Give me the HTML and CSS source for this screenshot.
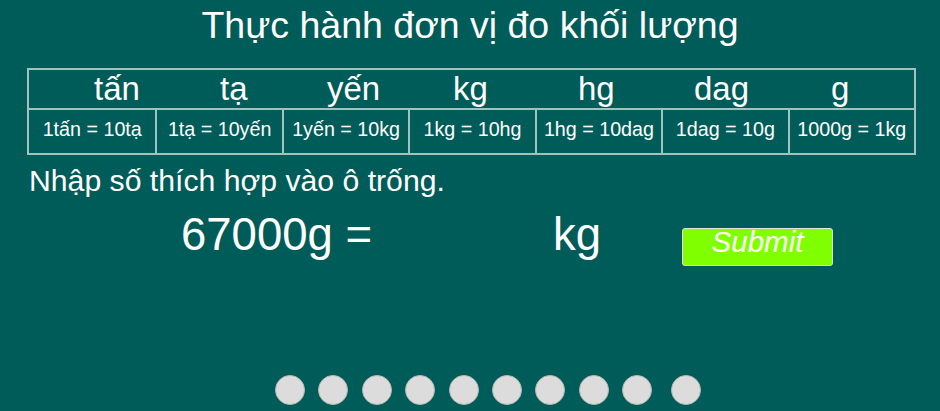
FILE: index.html
```html
<!DOCTYPE html>
<html lang="vi">
<head>
<meta charset="utf-8">
<title>Thực hành đơn vị đo khối lượng</title>
<link rel="stylesheet" href="styles.css">
</head>
<body>
<main class="page">
  <h1 class="title">Thực hành đơn vị đo khối lượng</h1>
  <div class="table">
    <div class="units">
      <span>tấn</span><span>tạ</span><span>yến</span><span>kg</span><span>hg</span><span>dag</span><span>g</span>
    </div>
    <div class="rules">
      <div class="rule">1tấn = 10tạ</div>
      <div class="rule">1tạ = 10yến</div>
      <div class="rule">1yến = 10kg</div>
      <div class="rule">1kg = 10hg</div>
      <div class="rule">1hg = 10dag</div>
      <div class="rule">1dag = 10g</div>
      <div class="rule">1000g = 1kg</div>
    </div>
  </div>
  <p class="prompt">Nhập số thích hợp vào ô trống.</p>
  <div class="equation">
    <div class="lhs"><span>67000g =</span><input class="answer" type="text" aria-label="answer"></div>
    <div class="unit">kg</div>
    <button class="submit" type="button">Submit</button>
  </div>
  <div class="dots">
    <span class="dot"></span><span class="dot"></span><span class="dot"></span><span class="dot"></span><span class="dot"></span><span class="dot"></span><span class="dot"></span><span class="dot"></span><span class="dot"></span><span class="dot dot-last"></span>
  </div>
</main>
</body>
</html>
```
FILE: styles.css
```css
html, body {
  margin: 0;
  padding: 0;
  background: #005c58;
}
body {
  font-family: "Liberation Sans", Arial, sans-serif;
  color: #ffffff;
}
.page {
  width: 940px;
  height: 411px;
  display: flex;
  flex-direction: column;
  box-sizing: border-box;
  padding-bottom: 6px;
}
.title {
  margin: 4px 0 0;
  font-size: 37.5px;
  line-height: 42px;
  font-weight: normal;
  text-align: center;
}
.table {
  margin: 22px 0 0 27px;
  width: 889px;
  border: 2px solid #a3c2bf;
  box-sizing: border-box;
}
.units {
  height: 38px;
  display: grid;
  grid-template-columns: 126px 107px 126px 125px 116px 137px 1fr;
  padding-left: 65px;
  align-items: center;
  font-size: 33px;
  line-height: 34px;
  border-bottom: 2px solid #a3c2bf;
}
.rules {
  height: 43px;
  display: grid;
  grid-template-columns: repeat(7, 1fr);
}
.rule {
  display: flex;
  align-items: center;
  justify-content: center;
  font-size: 19.7px;
  padding-bottom: 4px;
  border-left: 2px solid #a3c2bf;
}
.rule:first-child {
  border-left: none;
}
.prompt {
  margin: 9.5px 0 0 29px;
  font-size: 30.2px;
  line-height: 32px;
}
.equation {
  margin-top: 13px;
  display: flex;
  align-items: flex-start;
  padding-left: 181px;
  font-size: 45.5px;
  line-height: 50px;
}
.lhs {
  width: 372px;
  display: flex;
}
.answer {
  flex: 1;
  min-width: 0;
  background: transparent;
  border: none;
  outline: none;
  color: #ffffff;
  font: inherit;
}
.unit {
  width: 129px;
}
.submit {
  margin-top: 18.6px;
  width: 151px;
  height: 38px;
  box-sizing: border-box;
  padding: 0 0 10px;
  background: #80ff00;
  border: 1px solid #e2e8e0;
  border-radius: 3px;
  color: #ffffff;
  font-family: "Liberation Sans", Arial, sans-serif;
  font-style: italic;
  font-size: 29.5px;
  line-height: 26px;
}
.dots {
  margin-top: auto;
  display: flex;
  gap: 13.4px;
  padding-left: 275px;
}
.dot {
  width: 30px;
  height: 30px;
  box-sizing: border-box;
  border-radius: 50%;
  background: #dcdcdc;
  border: 1px solid #b8b8b8;
}
.dot-last {
  margin-left: 5.3px;
}
```
